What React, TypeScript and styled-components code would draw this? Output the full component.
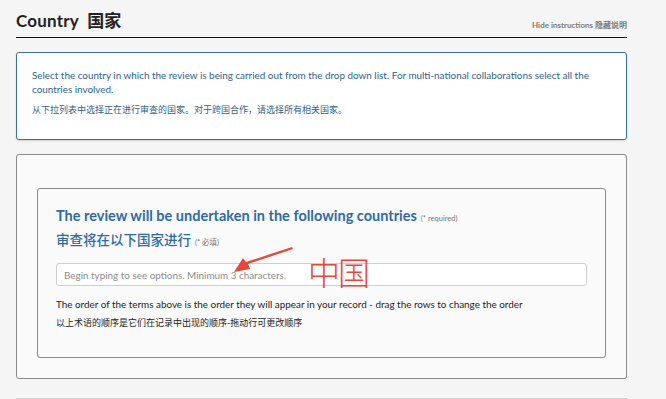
import styled, { createGlobalStyle } from 'styled-components'

const GlobalStyle = createGlobalStyle`
  html, body {
    margin: 0;
    padding: 0;
    background: #f5f5f5;
  }
  body {
    font-family: Lato, "Noto Sans CJK SC", sans-serif;
    color: #222;
  }
`

const Page = styled.div`
  position: relative;
  width: 611px;
  margin-left: 16px;
`

const Header = styled.div`
  display: flex;
  align-items: flex-end;
  justify-content: space-between;
  height: 38px;
  border-bottom: 1px solid #111;
  box-sizing: border-box;
  padding-bottom: 5px;
`

const Title = styled.h1`
  margin: 0;
  font-size: 17px;
  font-weight: 700;
  color: #222;
  letter-spacing: 0.2px;
`

const HideLink = styled.a`
  font-size: 8px;
  font-weight: 700;
  color: #7a7a7a;
  margin-bottom: 2px;
  cursor: pointer;
`

const InfoBox = styled.div`
  margin-top: 14px;
  height: 88px;
  box-sizing: border-box;
  background: #fff;
  border: 1px solid #3c6e9a;
  border-radius: 3px;
  box-shadow: 0 1px 2px rgba(0, 0, 0, 0.15);
  padding: 15px 20px 0 15px;
  color: #2d5f8f;
`

const Para = styled.p`
  margin: 0 0 7px 0;
  font-size: 9.9px;
  line-height: 14px;
`

const CnPara = styled.p`
  margin: 0;
  font-size: 9px;
  line-height: 14px;
`

const OuterPanel = styled.div`
  margin-top: 14px;
  height: 225px;
  box-sizing: border-box;
  background: #fafafa;
  border: 1px solid #8a8a8a;
  border-radius: 3px;
  padding: 33px 20px 0 20px;
`

const InnerPanel = styled.div`
  height: 170px;
  box-sizing: border-box;
  border: 1px solid #8a8a8a;
  border-radius: 3px;
  padding: 17px 18px 0 18px;
`

const FieldTitle = styled.div`
  font-size: 14.5px;
  font-weight: 700;
  color: #2f6ba2;
  line-height: 20px;
  white-space: nowrap;
`

const CnFieldTitle = styled(FieldTitle)`
  margin-top: 1px;
  font-size: 13.5px;
  font-weight: 500;
`

const Required = styled.span`
  font-size: 7.5px;
  font-weight: 400;
  color: #777;
  margin-left: 4px;
`

const Input = styled.input`
  display: block;
  width: 100%;
  height: 23px;
  box-sizing: border-box;
  margin-top: 10px;
  border: 1px solid #cfcfcf;
  border-radius: 3px;
  background: #fff;
  padding: 0 7px;
  font-family: Lato, "Noto Sans CJK SC", sans-serif;
  font-size: 9.9px;
  outline: none;
  &::placeholder {
    color: #8a8a8a;
  }
`

const Note = styled.p<{ $top: number }>`
  margin: ${p => p.$top}px 0 0 0;
  font-size: 9.9px;
  line-height: 12px;
  color: #222;
`

const CnNote = styled(Note)`
  font-size: 9px;
`

const BottomRule = styled.div`
  margin-top: 19px;
  height: 1px;
  background: #cfcfcf;
`

const Arrow = styled.svg`
  position: absolute;
  left: 212px;
  top: 244px;
  width: 70px;
  height: 32px;
  overflow: visible;
`

const Stamp = styled.div`
  position: absolute;
  left: 292px;
  top: 251px;
  font-family: "Noto Sans CJK SC", sans-serif;
  font-size: 32px;
  font-weight: 300;
  line-height: 40px;
  color: #e8483c;
  letter-spacing: -2px;
`

export default function App() {
  return (
    <>
      <GlobalStyle />
      <Page>
        <Header>
          <Title>Country&nbsp; 国家</Title>
          <HideLink>Hide instructions 隐藏说明</HideLink>
        </Header>

        <InfoBox>
          <Para>
            Select the country in which the review is being carried out from the drop down list. For multi-national collaborations select all the countries involved.
          </Para>
          <CnPara>从下拉列表中选择正在进行审查的国家。对于跨国合作，请选择所有相关国家。</CnPara>
        </InfoBox>

        <OuterPanel>
          <InnerPanel>
            <FieldTitle>
              The review will be undertaken in the following countries
              <Required>(* required)</Required>
            </FieldTitle>
            <CnFieldTitle>
              审查将在以下国家进行
              <Required>(* 必填)</Required>
            </CnFieldTitle>
            <Input placeholder="Begin typing to see options. Minimum 3 characters." />
            <Note $top={12}>
              The order of the terms above is the order they will appear in your record - drag the rows to change the order
            </Note>
            <CnNote $top={7}>以上术语的顺序是它们在记录中出现的顺序-拖动行可更改顺序</CnNote>
          </InnerPanel>
        </OuterPanel>

        <BottomRule />

        <Arrow viewBox="0 0 70 32">
          <polygon points="64,3 65,5 20,20 22,25 6,28 15,14 18,18" fill="#e8483c" />
        </Arrow>
        <Stamp>中国</Stamp>
      </Page>
    </>
  )
}
